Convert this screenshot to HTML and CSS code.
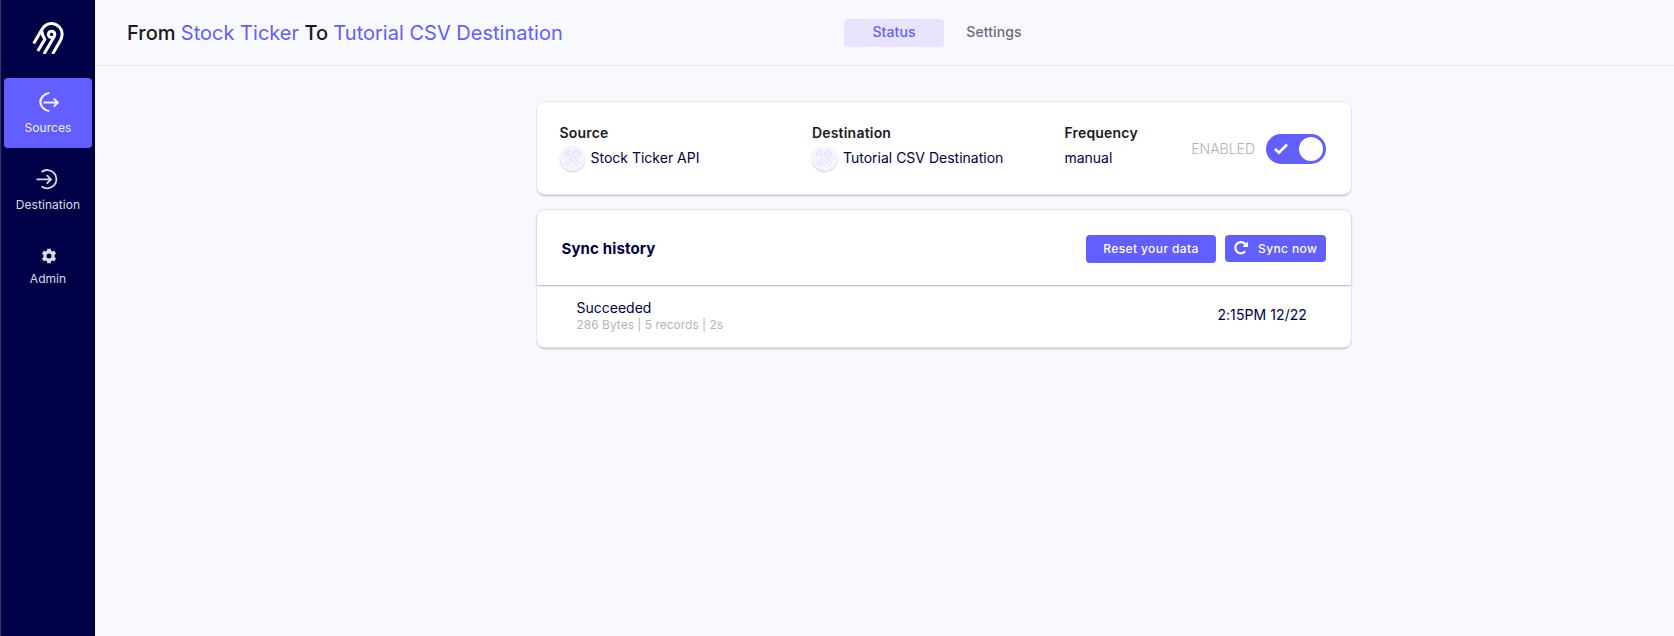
FILE: index.html
```html
<!DOCTYPE html>
<html lang="en">
<head>
<meta charset="utf-8">
<title>Connection status</title>
<link rel="stylesheet" href="styles.css">
</head>
<body>
<div class="app">
  <nav class="sidebar">
    <svg class="logo" width="36" height="36" viewBox="0 0 36 36" fill="none" stroke="#fff" stroke-width="3">
      <path d="M3.700 25.600 11.600 11.900C14.300 7.300 17.800 5.300 22 5.500C28 5.900 32.300 10.800 32.100 16.500C32 19 31.400 20.700 30.400 22.500L22.600 36"/>
      <path d="M11.600 12.500C12.200 17.500 13.200 18.800 14.900 21.400L7.800 33"/>
      <circle cx="21.600" cy="16.400" r="3.200"/>
      <path d="M24.200 18.500 14 36"/>
    </svg>
    <a class="nav-item active">
      <svg width="20" height="20" viewBox="0 0 20 20" fill="none" stroke="currentColor" stroke-width="1.900"><path d="M10.500.9A9.300 9.300 0 0 0 10.500 19.100" transform="matrix(1.220 0 0 1 -2.400 0)"/><path d="M4.500 10.500H18.700M14.700 6.300 18.900 10.500 14.700 14.700"/></svg>
      <span>Sources</span>
    </a>
    <a class="nav-item destination">
      <svg width="22" height="22" viewBox="0 0 22 22" fill="none" stroke="currentColor" stroke-width="1.800"><path d="M5.500 4A9.200 9.200 0 1 1 5.500 18.400M.5 11.400H14.500M10.700 7.100 15 11.400 10.700 15.700"/></svg>
      <span>Destination</span>
    </a>
    <a class="nav-item admin">
      <svg width="16" height="16" viewBox="0 0 16 16" fill="currentColor"><path fill-rule="evenodd" d="M6.300.7h3.400l.4 2 1.300.7 1.900-.7 1.700 2.900-1.500 1.500v1.800l1.500 1.500-1.700 2.900-1.900-.7-1.300.7-.4 2H6.300l-.4-2-1.300-.7-1.900.7L1 10.400l1.500-1.500V7.100L1 5.600l1.700-2.900 1.900.7 1.300-.7zM8 5.500a2.500 2.500 0 1 0 0 5 2.500 2.500 0 0 0 0-5z"/></svg>
      <span>Admin</span>
    </a>
  </nav>
  <div class="page">
    <header class="topbar">
      <h1 class="title">From <a>Stock Ticker</a> To <a>Tutorial CSV Destination</a></h1>
      <div class="tabs"><a class="tab selected">Status</a><a class="tab">Settings</a></div>
    </header>
    <main class="content">
      <section class="card summary">
        <div class="field">
          <h2>Source</h2>
          <div class="value"><span class="badge"><svg class="tools" width="18" height="18" viewBox="0 0 18 18"><path d="M5.200 1.200C7 2.500 7.200 4.700 6.300 6.100C4.800 7.300 2.500 7 1.200 5.200M1 4 3.300 4.500 4.500 3.300 4 1M6.300 6.100 9 8.800M8.500 9 1.200 15.500M3.500 17.300 9.500 11.700M14.500 1.200C10 1 9.300 4 10.500 6.800L12 8C14.500 8.600 17 7 16.800 3.500L14.300 5.500 12.500 4 14.500 1.200M11.500 9.500 17 14.500M10 12 14.500 17"/></svg></span>Stock Ticker API</div>
        </div>
        <div class="field">
          <h2>Destination</h2>
          <div class="value"><span class="badge"><svg class="tools" width="18" height="18" viewBox="0 0 18 18"><path d="M5.200 1.200C7 2.500 7.200 4.700 6.300 6.100C4.800 7.300 2.500 7 1.200 5.200M1 4 3.300 4.500 4.500 3.300 4 1M6.300 6.100 9 8.800M8.500 9 1.200 15.500M3.500 17.300 9.500 11.700M14.500 1.200C10 1 9.300 4 10.500 6.800L12 8C14.500 8.600 17 7 16.800 3.500L14.300 5.500 12.500 4 14.500 1.200M11.500 9.500 17 14.500M10 12 14.500 17"/></svg></span>Tutorial CSV Destination</div>
        </div>
        <div class="field frequency">
          <h2>Frequency</h2>
          <div class="value">manual</div>
        </div>
        <div class="enabled">
          <span class="enabled-label">ENABLED</span>
          <span class="switch"><svg width="14" height="12" viewBox="0 0 14 12" fill="none" stroke="#fff" stroke-width="2.700"><path d="M1 6 5 9.700 13 1.500"/></svg><i class="knob"></i></span>
        </div>
      </section>
      <section class="card history">
        <div class="history-head">
          <h2>Sync history</h2>
          <div class="actions">
            <button class="btn reset">Reset your data</button>
            <button class="btn sync"><svg width="14" height="14" viewBox="0 0 14 14"><path d="M11.200 10.300A5.600 5.600 0 1 1 11.300 3.300" fill="none" stroke="#fff" stroke-width="2.200"/><path d="M13.900.5V6.100H8.300z" fill="#fff"/></svg><span>Sync now</span></button>
          </div>
        </div>
        <div class="job">
          <div><div class="job-status">Succeeded</div><div class="job-info">286 Bytes | 5 records | 2s</div></div>
          <div class="job-time">2:15PM 12/22</div>
        </div>
      </section>
    </main>
  </div>
</div>
</body>
</html>
```
FILE: styles.css
```css
* { box-sizing: border-box; }
body { margin: 0; font-family: Inter, "Liberation Sans", sans-serif; color: #1a1a21; }
h1, h2 { margin: 0; }
.app { display: flex; height: 636px; background: #f8f9ff; }
.sidebar { width: 95px; flex: none; background: #000046; border-left: 1px solid #34346b; display: flex; flex-direction: column; align-items: center; padding-top: 18px; }
.logo { margin-bottom: 24px; flex: none; }
.nav-item { width: 88px; height: 70px; border-radius: 4px; display: flex; flex-direction: column; align-items: center; color: #dcdce4; font-size: 12px; line-height: 15px; letter-spacing: .05px; padding-top: 14px; }
.nav-item span { margin-top: 8px; }
.nav-item.active { background: #625eff; color: #f0f0ff; }
.nav-item.active svg { margin-left: 2px; }
.nav-item.destination { margin-top: 7px; padding-top: 13px; }
.nav-item.destination svg { margin-right: 2px; }
.nav-item.destination span { margin-top: 7px; }
.nav-item.admin { margin-top: 7px; padding-top: 16px; }
.nav-item.admin svg { margin-left: 1px; }
.nav-item.admin span { margin-top: 7px; }
.page { flex: 1; }
.topbar { height: 66px; border-bottom: 1px solid #e6e8ee; display: flex; align-items: center; padding-left: 32px; }
.title { width: 717px; font-size: 20px; font-weight: 500; line-height: 24px; letter-spacing: .01px; white-space: nowrap; }
.title a { color: #625eff; font-weight: 400; }
.tabs { display: flex; }
.tab { width: 100px; height: 28px; border-radius: 4px; text-align: center; font-size: 14px; line-height: 26px; font-weight: 500; color: #6b6b7b; letter-spacing: .1px; }
.tab.selected { background: #e8e4ff; color: #625eff; }
.content { width: 814px; margin: 36px 0 0 442px; }
.card { background: #fff; border-radius: 8px; box-shadow: 0 0 0 1px #e6e6ee, 0 2px 2px #bdbdc8; }
.summary { height: 92px; display: flex; padding: 22px 25px 0 22.500px; }
.field { width: 252.800px; }
.field.frequency { width: 127px; }
.field h2 { font-size: 14px; line-height: 17px; font-weight: 600; letter-spacing: .2px; }
.value { display: flex; align-items: center; height: 26px; margin-top: 3px; font-size: 14px; color: #000046; white-space: nowrap; }
.badge { width: 25px; height: 25px; margin: 2px 6px 0 0; border-radius: 50%; background: #f6f5ff; box-shadow: 0 1px 2px #ccccd8; display: flex; align-items: center; justify-content: center; }
.tools { fill: none; stroke: #dcd8ff; stroke-width: 1; }
.enabled { flex: 1; display: flex; justify-content: flex-end; height: 30px; margin-top: 10px; align-items: center; }
.enabled-label { font-size: 14px; line-height: 17px; color: #b0b0bd; font-weight: 300; margin: 0 11px 2px 0; }
.switch { width: 60px; height: 30px; border-radius: 15px; background: #625eff; display: flex; align-items: center; justify-content: space-between; padding: 0 3px 0 8px; }
.knob { width: 24px; height: 24px; border-radius: 50%; background: #fff; }
.history { height: 137px; margin-top: 16px; }
.history-head { height: 75px; border-radius: 8px 8px 0 0; display: flex; justify-content: space-between; align-items: center; padding: 2px 25px 0 24.500px; box-shadow: 0 1px 2px #b4b4c0; }
.history-head h2 { font-size: 15px; font-weight: 700; color: #000046; letter-spacing: .13px; }
.actions { display: flex; gap: 9px; }
.btn { border: 0; border-radius: 4px; background: #625eff; color: #fff; font: 500 12px/15px Inter, sans-serif; letter-spacing: .4px; padding: 0; }
.reset { width: 130px; height: 28px; }
.sync { width: 101px; height: 27px; display: flex; align-items: center; padding-left: 9px; gap: 10px; white-space: nowrap; }
.job { height: 61px; display: flex; justify-content: space-between; padding: 14px 44px 0 39.500px; color: #000046; font-size: 14px; line-height: 17px; }
.job-info { color: #b4b4c0; font-size: 12px; line-height: 15px; margin-top: 1px; }
.job-time { padding-top: 7px; letter-spacing: .08px; }
```
